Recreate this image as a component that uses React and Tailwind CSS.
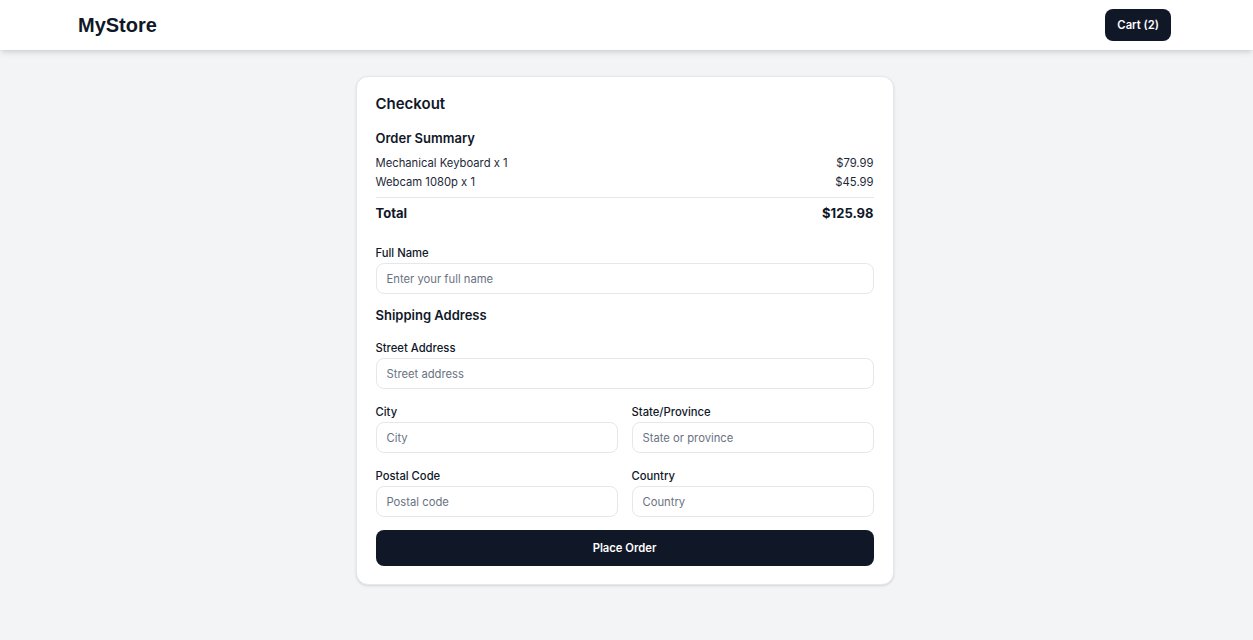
import React from 'react';

const items = [
  { name: 'Mechanical Keyboard', qty: 1, price: 79.99 },
  { name: 'Webcam 1080p', qty: 1, price: 45.99 },
];

const Field = ({ label, placeholder, className = '' }) => (
  <div className={`flex flex-col ${className}`}>
    <label className="pt-px text-[11.25px] leading-4 font-medium text-gray-900">{label}</label>
    <input
      type="text"
      placeholder={placeholder}
      className="mt-[2px] h-[31px] w-full rounded-lg border border-gray-200 bg-white px-[10px] text-[11.25px] text-gray-900 placeholder:text-gray-500 outline-none"
    />
  </div>
);

const App = () => {
  const total = items.reduce((sum, i) => sum + i.price * i.qty, 0);

  return (
    <div className="min-h-screen bg-gray-100 font-['Inter',sans-serif] text-gray-900">
      <header className="bg-white shadow-md">
        <div className="flex h-[50px] items-center justify-between pl-[78px] pr-[82px]">
          <span className="font-['Liberation_Sans',Arial,sans-serif] text-[20px] font-bold leading-7 text-gray-900">
            MyStore
          </span>
          <button className="h-8 rounded-lg bg-gray-900 px-3 text-[11.25px] font-semibold text-white">
            Cart (2)
          </button>
        </div>
      </header>

      <main className="pt-[26px] pr-1 pb-10">
        <div className="mx-auto w-[538px] rounded-xl border border-gray-200 bg-white px-[19px] pt-[15px] pb-[18px] shadow-sm">
          <h2 className="text-[15px] leading-6 font-semibold">Checkout</h2>

          <section className="mt-[12px]">
            <h3 className="text-[13px] leading-5 font-semibold">Order Summary</h3>
            <ul className="mt-[7px] flex flex-col gap-[3px]">
              {items.map((item) => (
                <li key={item.name} className="flex justify-between text-[11.25px] leading-4 text-gray-800">
                  <span>
                    {item.name} x {item.qty}
                  </span>
                  <span>${item.price.toFixed(2)}</span>
                </li>
              ))}
            </ul>
            <div className="mt-[7px] flex justify-between border-t border-gray-200 pt-[5px] text-[13px] leading-5 font-bold">
              <span>Total</span>
              <span>${total.toFixed(2)}</span>
            </div>
          </section>

          <form className="mt-[21px] flex flex-col" onSubmit={(e) => e.preventDefault()}>
            <Field label="Full Name" placeholder="Enter your full name" />

            <h3 className="mt-[11px] text-[13px] leading-5 font-semibold">Shipping Address</h3>

            <Field className="mt-[14px]" label="Street Address" placeholder="Street address" />

            <div className="mt-[14px] grid grid-cols-2 gap-x-[14px]">
              <Field label="City" placeholder="City" />
              <Field label="State/Province" placeholder="State or province" />
            </div>

            <div className="mt-[14px] grid grid-cols-2 gap-x-[14px]">
              <Field label="Postal Code" placeholder="Postal code" />
              <Field label="Country" placeholder="Country" />
            </div>

            <button
              type="submit"
              className="mt-[13px] h-[36px] w-full rounded-lg bg-gray-900 text-[11.25px] font-semibold text-white"
            >
              Place Order
            </button>
          </form>
        </div>
      </main>
    </div>
  );
};

export default App;
